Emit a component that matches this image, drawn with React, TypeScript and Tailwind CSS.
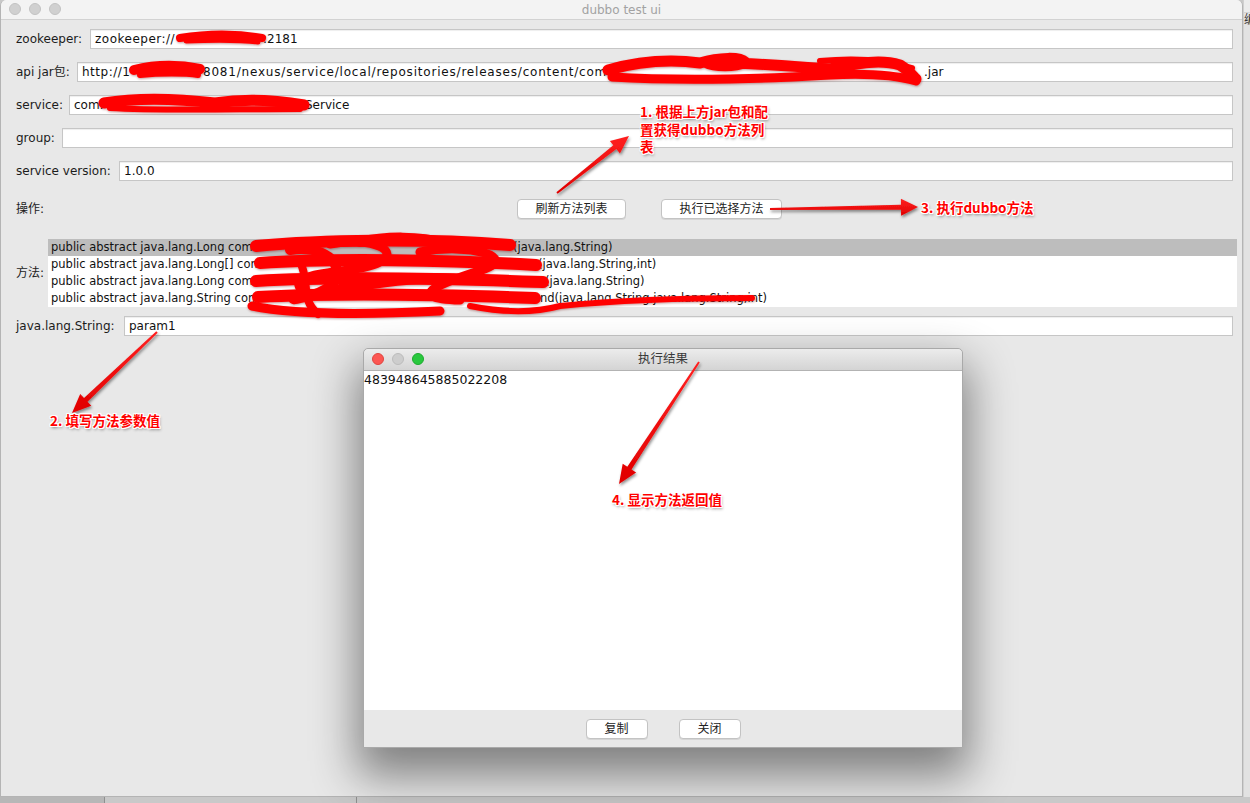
const ui = "font-['DejaVu_Sans','Noto_Sans_CJK_SC',sans-serif]"
const mark =
  "font-['Noto_Sans_CJK_SC',sans-serif] font-bold text-[13.5px] leading-[17.5px] text-[#ff0000] [text-shadow:1px_0_0_#fff,-1px_0_0_#fff,0_1px_0_#fff,0_-1px_0_#fff,1px_1px_0_#fff,-1px_-1px_0_#fff,1px_-1px_0_#fff,-1px_1px_0_#fff,1px_2px_3px_rgba(0,0,0,0.45)]"

function Arrow({ x1, y1, x2, y2, w1 = 2, w2 = 5, len = 18, half = 8 }: {
  x1: number; y1: number; x2: number; y2: number; w1?: number; w2?: number; len?: number; half?: number
}) {
  const dx = x2 - x1
  const dy = y2 - y1
  const d = Math.hypot(dx, dy)
  const ux = dx / d
  const uy = dy / d
  const nx = -uy
  const ny = ux
  const bx = x2 - ux * len
  const by = y2 - uy * len
  const p = (x: number, y: number) => `${x.toFixed(1)},${y.toFixed(1)}`
  const pts = [
    p(x1 + (nx * w1) / 2, y1 + (ny * w1) / 2),
    p(bx + (nx * w2) / 2, by + (ny * w2) / 2),
    p(bx + nx * half, by + ny * half),
    p(x2, y2),
    p(bx - nx * half, by - ny * half),
    p(bx - (nx * w2) / 2, by - (ny * w2) / 2),
    p(x1 - (nx * w1) / 2, y1 - (ny * w1) / 2),
  ].join(" ")
  return <polygon points={pts} fill="url(#redfill)" filter="url(#ashadow)" />
}

function Field({ label, lw, children }: { label: string; lw: number; children?: React.ReactNode }) {
  return (
    <div className="flex items-center h-[20px] pl-[15px] pr-[9px] mt-[13px] first:mt-0">
      <span className="shrink-0 text-[12px] text-[#1c1c1c] whitespace-nowrap" style={{ width: lw }}>
        {label}
      </span>
      <div className="flex-1 h-full bg-white border border-[#c6c6c6] shadow-[inset_0_1px_1px_rgba(0,0,0,0.07)] pl-[4px] flex items-center text-[12px] text-[#111] whitespace-nowrap">
        {children}
      </div>
    </div>
  )
}

// fixed-width slot: keeps the text after a redacted part at its place
function Slot({ w, className = "", children }: { w: number; className?: string; children?: React.ReactNode }) {
  return (
    <span className={`inline-block shrink-0 whitespace-nowrap ${className}`} style={{ width: w }}>
      {children}
    </span>
  )
}

function MacButton({ label, w }: { label: string; w: number }) {
  return (
    <div
      className="h-[20px] bg-white border border-[#c3c3c3] rounded-[4px] shadow-[0_1px_0_rgba(0,0,0,0.08)] flex items-center justify-center text-[12px] text-[#222]"
      style={{ width: w }}
    >
      {label}
    </div>
  )
}

const methods = [
  { left: "public abstract java.lang.Long com.", w: 462, right: "(java.lang.String)" },
  { left: "public abstract java.lang.Long[] com", w: 487, right: "(java.lang.String,int)" },
  { left: "public abstract java.lang.Long com", w: 494, right: "(java.lang.String)" },
  { left: "public abstract java.lang.String com.", w: 489, right: "nd(java.lang.String,java.lang.String,int)" },
]

export default function App() {
  return (
    <div className={`relative w-[1250px] h-[803px] overflow-hidden bg-[#c8c8c8] ${ui}`}>
      <div className="flex h-[797px]">
        {/* main window */}
        <div className="w-[1243px] shrink-0 h-full flex flex-col bg-[#e8e8e8] border-l border-r border-b border-[#b4b4b4] rounded-t-[6px] overflow-hidden">
          <div className="relative h-[20px] shrink-0 bg-[#f3f3f3] border-b border-[#d2d2d2] flex items-center justify-center">
            <div className="absolute left-[8px] top-[3px] flex gap-[8px]">
              <span className="w-[12px] h-[12px] rounded-full bg-[#d0d0d0] border border-[#c2c2c2]" />
              <span className="w-[12px] h-[12px] rounded-full bg-[#d0d0d0] border border-[#c2c2c2]" />
              <span className="w-[12px] h-[12px] rounded-full bg-[#d0d0d0] border border-[#c2c2c2]" />
            </div>
            <span className="text-[12px] text-[#a2a2a2]">dubbo test ui</span>
          </div>

          <div className="flex flex-col pt-[9px]">
            <Field label="zookeeper:" lw={74}>
              <Slot w={168} className="tracking-[0.5px]">zookeeper://</Slot>
              <span>:2181</span>
            </Field>
            <Field label="api jar包:" lw={61}>
              <Slot w={121} className="tracking-[0.5px]">http://1</Slot>
              <Slot w={721} className="tracking-[0.8px]">8081/nexus/service/local/repositories/releases/content/com</Slot>
              <span>.jar</span>
            </Field>
            <Field label="service:" lw={53}>
              <Slot w={231}>com.</Slot>
              <span>Service</span>
            </Field>
            <Field label="group:" lw={46} />
            <Field label="service version:" lw={103}>
              <span>1.0.0</span>
            </Field>

            <div className="flex items-center h-[20px] pl-[15px] mt-[18px]">
              <span className="w-[501px] shrink-0 text-[12px] text-[#1c1c1c]">操作:</span>
              <MacButton label="刷新方法列表" w={109} />
              <div className="w-[35px]" />
              <MacButton label="执行已选择方法" w={121} />
            </div>

            <div className="flex items-center pl-[15px] pr-[5px] mt-[20px]">
              <span className="w-[32px] shrink-0 text-[12px] text-[#1c1c1c]">方法:</span>
              <div className="flex-1 h-[68px] bg-white flex flex-col text-[11.5px] text-[#111]">
                {methods.map((m, i) => (
                  <div
                    key={i}
                    className={`h-[17px] flex items-center pl-[3px] whitespace-nowrap ${i === 0 ? "bg-[#bdbdbd]" : ""}`}
                  >
                    <Slot w={m.w}>{m.left}</Slot>
                    <span>{m.right}</span>
                  </div>
                ))}
              </div>
            </div>

            <div className="mt-[9px]">
              <Field label="java.lang.String:" lw={108}>
                <span>param1</span>
              </Field>
            </div>
          </div>
        </div>

        {/* window behind, right edge */}
        <div className="flex-1 min-w-0 overflow-hidden flex flex-col bg-[#e2e2e2] border-l border-[#d0d0d0]">
          <div className="h-[13px] bg-[#ececec] border-b border-[#d4d4d4]" />
          <span className="text-[12px] leading-[14px] text-[#333] whitespace-nowrap">编</span>
        </div>
      </div>

      {/* dock strip */}
      <div className="flex h-[6px]">
        <div className="w-[105px] bg-[#b7b7b7] border-r border-[#8f8f8f]" />
        <div className="w-[252px] bg-[#c9c9c9] border-r border-[#8f8f8f]" />
        <div className="flex-1 bg-[#c9c9c9]" />
      </div>

      {/* result dialog */}
      <div className="absolute left-[363px] top-[348px] w-[600px] h-[400px] flex flex-col rounded-t-[5px] border border-[#a9a9a9] bg-[#e8e8e8] shadow-[0_22px_45px_6px_rgba(0,0,0,0.45)]">
        <div className="relative h-[22px] shrink-0 rounded-t-[5px] bg-gradient-to-b from-[#ececec] to-[#d4d4d4] border-b border-[#b3b3b3] flex items-center justify-center">
          <div className="absolute left-[8px] top-[4px] flex gap-[8px]">
            <span className="w-[12px] h-[12px] rounded-full bg-[#fc5652] border border-[#e0443e]" />
            <span className="w-[12px] h-[12px] rounded-full bg-[#cdcdcd] border border-[#bcbcbc]" />
            <span className="w-[12px] h-[12px] rounded-full bg-[#29c83e] border border-[#1eaa2f]" />
          </div>
          <span className="text-[12.5px] text-[#3a3a3a]">执行结果</span>
        </div>
        <div className="h-[339px] bg-white text-[12.5px] leading-[16px] text-[#111] pt-[1px]">483948645885022208</div>
        <div className="flex-1 flex items-center justify-center gap-[31px]">
          <MacButton label="复制" w={62} />
          <MacButton label="关闭" w={62} />
        </div>
      </div>

      {/* redaction scribbles and annotation arrows */}
      <svg className="absolute left-0 top-0 pointer-events-none" width="1250" height="803" viewBox="0 0 1250 803">
        <defs>
          <linearGradient id="redfill" x1="0" y1="0" x2="0" y2="1">
            <stop offset="0" stopColor="#ff2020" />
            <stop offset="1" stopColor="#e00000" />
          </linearGradient>
          <filter id="ashadow" x="-20%" y="-20%" width="140%" height="140%">
            <feDropShadow dx="1" dy="2" stdDeviation="1.5" floodColor="#000" floodOpacity="0.45" />
          </filter>
          <filter id="sshadow" x="-10%" y="-20%" width="120%" height="140%">
            <feDropShadow dx="0.5" dy="1" stdDeviation="0.8" floodColor="#600" floodOpacity="0.4" />
          </filter>
        </defs>
        <g fill="none" stroke="#ff0000" strokeLinecap="round" strokeLinejoin="round" filter="url(#sshadow)">
          {/* zookeeper */}
          <path d="M180 38 C210 33 240 34 262 38" strokeWidth="8" />
          <path d="M186 41 C215 40 240 40 258 42" strokeWidth="5" />
          {/* api jar */}
          <path d="M134 70 C155 65 180 65 200 69" strokeWidth="10" />
          <path d="M140 75 C160 73 185 73 198 75" strokeWidth="6" />
          <path d="M608 70 C640 61 670 59 700 63 C720 57 740 57 745 62 C735 67 715 67 705 62 C760 63 800 67 830 69 C860 63 880 59 900 65 C908 70 912 75 916 79" strokeWidth="11" />
          <path d="M612 77 C680 81 760 79 830 75 C870 73 895 75 916 81" strokeWidth="9" />
          <path d="M820 61 C860 57 890 61 912 68" strokeWidth="6" />
          {/* service */}
          <path d="M104 103 C140 97 180 99 215 103 C240 99 270 99 304 105" strokeWidth="11" />
          <path d="M110 108 C160 111 230 109 300 109" strokeWidth="6" />
          {/* method list */}
          <path d="M256 246 C320 240 420 238 510 245" strokeWidth="12" />
          <path d="M260 263 C330 258 450 260 536 265" strokeWidth="12" />
          <path d="M256 281 C340 276 460 279 543 282" strokeWidth="12" />
          <path d="M258 297 C330 293 450 295 535 298" strokeWidth="12" />
          <path d="M290 250 C340 242 360 288 300 298 C262 306 400 270 470 280" strokeWidth="10" />
          <path d="M330 244 C375 236 400 252 380 262 C360 274 282 270 302 290" strokeWidth="9" />
          <path d="M420 252 C470 242 520 258 482 270 C444 282 400 298 460 300" strokeWidth="9" />
          <path d="M300 262 C310 280 300 300 318 314" strokeWidth="8" />
          <path d="M252 306 C300 316 380 314 440 311" strokeWidth="9" />
          <path d="M470 306 C500 312 530 314 560 306 C620 300 680 298 752 298" strokeWidth="6" />
          <path d="M360 242 C385 236 420 236 445 243" strokeWidth="10" />
        </g>
        <Arrow x1={557} y1={193} x2={629} y2={136} w1={2} w2={5} len={18} half={8} />
        <Arrow x1={770} y1={209} x2={918} y2={207} w1={2} w2={5} len={17} half={8.5} />
        <Arrow x1={157} y1={332} x2={72} y2={413} w1={2} w2={5} len={19} half={8} />
        <Arrow x1={699} y1={362} x2={619} y2={484} w1={2} w2={5} len={19} half={8} />
      </svg>

      <div className={`absolute left-[640px] top-[103px] ${mark}`}>
        1. 根据上方jar包和配
        <br />
        置获得dubbo方法列
        <br />
        表
      </div>
      <div className={`absolute left-[921px] top-[199px] whitespace-nowrap ${mark}`}>3. 执行dubbo方法</div>
      <div className={`absolute left-[50px] top-[412px] whitespace-nowrap ${mark}`}>2. 填写方法参数值</div>
      <div className={`absolute left-[612px] top-[491px] whitespace-nowrap ${mark}`}>4. 显示方法返回值</div>
    </div>
  )
}
